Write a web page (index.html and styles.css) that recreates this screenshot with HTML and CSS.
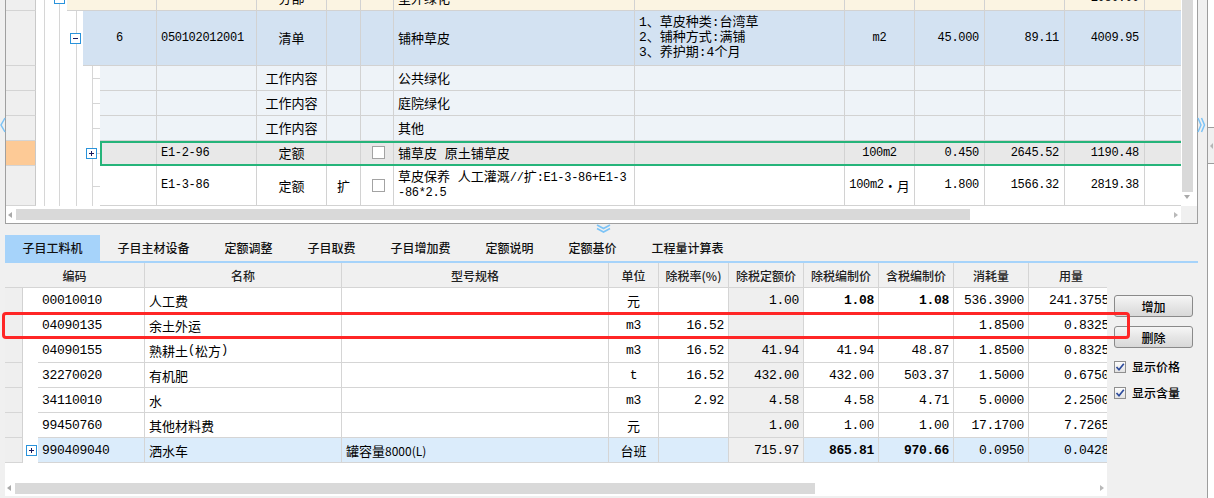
FILE: index.html
```html
<!DOCTYPE html>
<html lang="zh-CN">
<head>
<meta charset="utf-8">
<title>子目工料机</title>
<link rel="stylesheet" href="styles.css">
</head>
<body>
<div class="app">
  <div class="main">
    <div class="tp">
      <div class="tp-body">
        <div class="rows">
          <div class="rows-in">
            <div class="r h25 lv0 cream">
              <div class="rh"></div>
              <div class="tree"><span class="tb at18"></span></div>
              <div class="cells">
                <div class="c c1"></div>
                <div class="c c2"></div>
                <div class="c c3 ctr">分部</div>
                <div class="c c4"></div>
                <div class="c c5"></div>
                <div class="c c6">室外绿化</div>
                <div class="c c7"></div>
                <div class="c c8"></div>
                <div class="c c9"></div>
                <div class="c c10"></div>
                <div class="c c11 n rt">1080.00</div>
                <div class="c c12"></div>
              </div>
            </div>
            <div class="r h55 lv1 blue">
              <div class="rh"></div>
              <div class="tree"><span class="tb at34"></span></div>
              <div class="cells">
                <div class="c c1 n ctr">6</div>
                <div class="c c2 n">050102012001</div>
                <div class="c c3 ctr">清单</div>
                <div class="c c4"></div>
                <div class="c c5"></div>
                <div class="c c6">铺种草皮</div>
                <div class="c c7 multi">
                  <div>1、草皮种类:台湾草</div>
                  <div>2、铺种方式:满铺</div>
                  <div>3、养护期:4个月</div>
                </div>
                <div class="c c8 n ctr">m2</div>
                <div class="c c9 n rt">45.000</div>
                <div class="c c10 n rt">89.11</div>
                <div class="c c11 n rt">4009.95</div>
                <div class="c c12"></div>
              </div>
            </div>
            <div class="r h25 lv2 light">
              <div class="rh"></div>
              <div class="tree tk"></div>
              <div class="cells">
                <div class="c c1"></div>
                <div class="c c2"></div>
                <div class="c c3 ctr">工作内容</div>
                <div class="c c4"></div>
                <div class="c c5"></div>
                <div class="c c6">公共绿化</div>
                <div class="c c7"></div>
                <div class="c c8"></div>
                <div class="c c9"></div>
                <div class="c c10"></div>
                <div class="c c11"></div>
                <div class="c c12"></div>
              </div>
            </div>
            <div class="r h25 lv2 light">
              <div class="rh"></div>
              <div class="tree tk"></div>
              <div class="cells">
                <div class="c c1"></div>
                <div class="c c2"></div>
                <div class="c c3 ctr">工作内容</div>
                <div class="c c4"></div>
                <div class="c c5"></div>
                <div class="c c6">庭院绿化</div>
                <div class="c c7"></div>
                <div class="c c8"></div>
                <div class="c c9"></div>
                <div class="c c10"></div>
                <div class="c c11"></div>
                <div class="c c12"></div>
              </div>
            </div>
            <div class="r h25 lv2 light">
              <div class="rh"></div>
              <div class="tree tk"></div>
              <div class="cells">
                <div class="c c1"></div>
                <div class="c c2"></div>
                <div class="c c3 ctr">工作内容</div>
                <div class="c c4"></div>
                <div class="c c5"></div>
                <div class="c c6">其他</div>
                <div class="c c7"></div>
                <div class="c c8"></div>
                <div class="c c9"></div>
                <div class="c c10"></div>
                <div class="c c11"></div>
                <div class="c c12"></div>
              </div>
            </div>
            <div class="r h25 lv2 sel">
              <div class="rh"></div>
              <div class="tree tk"><span class="tb plus at50"></span></div>
              <div class="cells">
                <div class="c c1"></div>
                <div class="c c2 n">E1-2-96</div>
                <div class="c c3 ctr">定额</div>
                <div class="c c4"></div>
                <div class="c c5"><span class="cb"></span></div>
                <div class="c c6">铺草皮 原土铺草皮</div>
                <div class="c c7"></div>
                <div class="c c8 n ctr">100m2</div>
                <div class="c c9 n rt">0.450</div>
                <div class="c c10 n rt">2645.52</div>
                <div class="c c11 n rt">1190.48</div>
                <div class="c c12"></div>
              </div>
            </div>
            <div class="r h40 lv2 white">
              <div class="rh"></div>
              <div class="tree tk"></div>
              <div class="cells">
                <div class="c c1"></div>
                <div class="c c2 n">E1-3-86</div>
                <div class="c c3 ctr">定额</div>
                <div class="c c4 ctr">扩</div>
                <div class="c c5"><span class="cb"></span></div>
                <div class="c c6 multi">
                  <div>草皮保养 人工灌溉<span class="n">//</span>扩<span class="n">:E1-3-86+E1-3</span></div>
                  <div class="n">-86*2.5</div>
                </div>
                <div class="c c7"></div>
                <div class="c c8 ctr"><span class="n">100m2</span>・月</div>
                <div class="c c9 n rt">1.800</div>
                <div class="c c10 n rt">1566.32</div>
                <div class="c c11 n rt">2819.38</div>
                <div class="c c12"></div>
              </div>
            </div>
          </div>
        </div>
        <div class="vs">
          <div class="vs-thumb"></div>
          <div class="vs-arr"></div>
        </div>
      </div>
      <div class="hs">
        <span class="arr-l"></span>
        <span class="hs-thumb"></span>
        <span class="hs-space"></span>
        <span class="arr-r"></span>
        <span class="hs-corner"></span>
      </div>
    </div>

    <div class="split">
      <svg width="15" height="9" viewBox="0 0 15 9"><polyline points="1,1 7.5,4.5 14,1" fill="none" stroke="#7cc3f6" stroke-width="1.6"/><polyline points="1,4.5 7.5,8 14,4.5" fill="none" stroke="#7cc3f6" stroke-width="1.6"/></svg>
    </div>

    <div class="tabs">
      <div class="tab on">子目工料机</div>
      <div class="tab">子目主材设备</div>
      <div class="tab">定额调整</div>
      <div class="tab">子目取费</div>
      <div class="tab">子目增加费</div>
      <div class="tab">定额说明</div>
      <div class="tab">定额基价</div>
      <div class="tab">工程量计算表</div>
    </div>

    <div class="bp">
      <div class="bgrid">
        <div class="br bh">
          <div class="bc bh0">编码</div>
          <div class="bc bw2">名称</div>
          <div class="bc bw3">型号规格</div>
          <div class="bc bw4">单位</div>
          <div class="bc bw5">除税率(%)</div>
          <div class="bc bw6">除税定额价</div>
          <div class="bc bw7">除税编制价</div>
          <div class="bc bw8">含税编制价</div>
          <div class="bc bw9">消耗量</div>
          <div class="bc bw10">用量</div>
        </div>
        <div class="br">
          <div class="brh"></div><div class="btree"></div>
          <div class="bc bw1 n">00010010</div>
          <div class="bc bw2">人工费</div>
          <div class="bc bw3"></div>
          <div class="bc bw4 ctr">元</div>
          <div class="bc bw5 n rt"></div>
          <div class="bc bw6 n rt g">1.00</div>
          <div class="bc bw7 n rt b">1.08</div>
          <div class="bc bw8 n rt b">1.08</div>
          <div class="bc bw9 n rt">536.3900</div>
          <div class="bc bw10 n rt">241.3755</div>
        </div>
        <div class="br">
          <div class="brh"></div><div class="btree"></div>
          <div class="bc bw1 n">04090135</div>
          <div class="bc bw2">余土外运</div>
          <div class="bc bw3"></div>
          <div class="bc bw4 n ctr">m3</div>
          <div class="bc bw5 n rt">16.52</div>
          <div class="bc bw6 n rt g"></div>
          <div class="bc bw7 n rt"></div>
          <div class="bc bw8 n rt"></div>
          <div class="bc bw9 n rt">1.8500</div>
          <div class="bc bw10 n rt">0.8325</div>
        </div>
        <div class="br">
          <div class="brh"></div><div class="btree"></div>
          <div class="bc bw1 n">04090155</div>
          <div class="bc bw2">熟耕土<span class="n">(</span>松方<span class="n">)</span></div>
          <div class="bc bw3"></div>
          <div class="bc bw4 n ctr">m3</div>
          <div class="bc bw5 n rt">16.52</div>
          <div class="bc bw6 n rt g">41.94</div>
          <div class="bc bw7 n rt">41.94</div>
          <div class="bc bw8 n rt">48.87</div>
          <div class="bc bw9 n rt">1.8500</div>
          <div class="bc bw10 n rt">0.8325</div>
        </div>
        <div class="br">
          <div class="brh"></div><div class="btree"></div>
          <div class="bc bw1 n">32270020</div>
          <div class="bc bw2">有机肥</div>
          <div class="bc bw3"></div>
          <div class="bc bw4 n ctr">t</div>
          <div class="bc bw5 n rt">16.52</div>
          <div class="bc bw6 n rt g">432.00</div>
          <div class="bc bw7 n rt">432.00</div>
          <div class="bc bw8 n rt">503.37</div>
          <div class="bc bw9 n rt">1.5000</div>
          <div class="bc bw10 n rt">0.6750</div>
        </div>
        <div class="br">
          <div class="brh"></div><div class="btree"></div>
          <div class="bc bw1 n">34110010</div>
          <div class="bc bw2">水</div>
          <div class="bc bw3"></div>
          <div class="bc bw4 n ctr">m3</div>
          <div class="bc bw5 n rt">2.92</div>
          <div class="bc bw6 n rt g">4.58</div>
          <div class="bc bw7 n rt">4.58</div>
          <div class="bc bw8 n rt">4.71</div>
          <div class="bc bw9 n rt">5.0000</div>
          <div class="bc bw10 n rt">2.2500</div>
        </div>
        <div class="br">
          <div class="brh"></div><div class="btree"></div>
          <div class="bc bw1 n">99450760</div>
          <div class="bc bw2">其他材料费</div>
          <div class="bc bw3"></div>
          <div class="bc bw4 ctr">元</div>
          <div class="bc bw5 n rt"></div>
          <div class="bc bw6 n rt g">1.00</div>
          <div class="bc bw7 n rt">1.00</div>
          <div class="bc bw8 n rt">1.00</div>
          <div class="bc bw9 n rt">17.1700</div>
          <div class="bc bw10 n rt">7.7265</div>
        </div>
        <div class="br hl">
          <div class="brh"></div><div class="btree"><span class="tb plus at3"></span></div>
          <div class="bc bw1 n">990409040</div>
          <div class="bc bw2">洒水车</div>
          <div class="bc bw3">罐容量<span class="sans">8000(L)</span></div>
          <div class="bc bw4 ctr">台班</div>
          <div class="bc bw5 n rt"></div>
          <div class="bc bw6 n rt g">715.97</div>
          <div class="bc bw7 n rt b">865.81</div>
          <div class="bc bw8 n rt b">970.66</div>
          <div class="bc bw9 n rt">0.0950</div>
          <div class="bc bw10 n rt">0.0428</div>
        </div>
        <div class="bfill"></div>
        <div class="bhs">
          <span class="arr-l"></span>
          <span class="bhs-thumb"></span>
          <span class="hs-space"></span>
          <span class="arr-r"></span>
        </div>
      </div>
      <div class="bside">
        <div class="btn">增加</div>
        <div class="btn">删除</div>
        <label class="chk first"><span class="box"><svg width="10" height="10" viewBox="0 0 10 10"><polyline points="1.5,5 4,7.8 8.8,1.8" fill="none" stroke="#2d4b9c" stroke-width="1.7"/></svg></span><span class="lbl">显示价格</span></label>
        <label class="chk"><span class="box"><svg width="10" height="10" viewBox="0 0 10 10"><polyline points="1.5,5 4,7.8 8.8,1.8" fill="none" stroke="#2d4b9c" stroke-width="1.7"/></svg></span><span class="lbl">显示含量</span></label>
      </div>
    </div>
  </div>
  <div class="side">
    <div class="side-gap"></div>
    <div class="side-line"></div>
    <div class="side-rest">
      <div class="side-a"></div>
      <div class="side-b"><span class="mini-l"></span></div>
      <div class="side-c"></div>
    </div>
  </div>
</div>

<svg class="chev-l" width="6" height="16" viewBox="0 0 6 16"><polyline points="5,1 1,8 5,15" fill="none" stroke="#7cc3f6" stroke-width="1.5"/></svg>
<svg class="chev-r" width="9" height="16" viewBox="0 0 9 16"><polyline points="1,1 4,8 1,15" fill="none" stroke="#7cc3f6" stroke-width="1.5"/><polyline points="4.5,1 7.5,8 4.5,15" fill="none" stroke="#7cc3f6" stroke-width="1.5"/></svg>
<div class="mark"></div>
</body>
</html>
```

FILE: styles.css
```css
* { box-sizing: border-box; margin: 0; padding: 0; }
html, body { width: 1214px; height: 498px; overflow: hidden; }
body {
  background: #f0f0f0;
  font-family: "Noto Sans CJK SC", "Liberation Sans", sans-serif;
  font-size: 12px;
  color: #000;
  position: relative;
}
.app { display: flex; height: 498px; }
.main { width: 1198px; flex-shrink: 0; padding-left: 5px; display: flex; flex-direction: column; }

/* right strip */
.side { width: 16px; flex-shrink: 0; display: flex; }
.side-gap { width: 9px; }
.side-line { width: 1px; background: #9d9d9d; }
.side-rest { flex: 1; display: flex; flex-direction: column; }
.side-a { height: 128px; background: #fff; border-bottom: 1px solid #9d9d9d; }
.side-b { height: 35px; display: flex; align-items: center; justify-content: center; }
.side-c { flex: 1; background: #fff; border-top: 1px solid #9d9d9d; }
.mini-l { width: 0; height: 0; border-right: 3px solid #b5b5b5; border-top: 3px solid transparent; border-bottom: 3px solid transparent; }

/* top panel */
.tp {
  height: 224px;
  border: 1px solid #a0a0a0;
  border-top: 0;
  background: #fff;
  display: flex;
  flex-direction: column;
  flex-shrink: 0;
}
.tp-body { height: 206px; display: flex; flex-shrink: 0; }
.rows { width: 1175px; overflow: hidden; flex-shrink: 0; }
.rows-in { margin-top: -14px; }
.r { display: flex; }
.h25 { height: 25px; }
.h55 { height: 55px; }
.h40 { height: 40px; }
.rh {
  width: 30px;
  flex-shrink: 0;
  background: #efefef;
  border-right: 1px solid #c9c9c9;
  border-bottom: 1px solid #d4d4d4;
}
.sel .rh { background: #fdca96; }

.tree {
  flex-shrink: 0;
  display: flex;
  align-items: center;
  background-color: #fff;
  background-image:
    linear-gradient(#d6d6d6, #d6d6d6),
    linear-gradient(#d6d6d6, #d6d6d6),
    linear-gradient(#d6d6d6, #d6d6d6),
    linear-gradient(#d6d6d6, #d6d6d6);
  background-size: 1px 100%, 1px 100%, 1px 100%, 1px 100%;
  background-position: 8px 0, 23px 0, 40px 0, 56px 0;
  background-repeat: no-repeat;
}
.tree.tk {
  background-image:
    linear-gradient(#d6d6d6, #d6d6d6),
    linear-gradient(#d6d6d6, #d6d6d6),
    linear-gradient(#d6d6d6, #d6d6d6),
    linear-gradient(#d6d6d6, #d6d6d6),
    linear-gradient(#d6d6d6, #d6d6d6);
  background-size: 1px 100%, 1px 100%, 1px 100%, 1px 100%, 8px 1px;
  background-position: 8px 0, 23px 0, 40px 0, 56px 0, 56px 50%;
}
.lv0 .tree { width: 31px; }
.lv1 .tree { width: 47px; }
.lv2 .tree { width: 64px; }

.tb {
  width: 11px;
  height: 11px;
  flex-shrink: 0;
  border: 1px solid #2a93db;
  background: #fff;
  position: relative;
}
.tb::before {
  content: "";
  position: absolute;
  left: 2px; right: 2px; top: 4px;
  height: 1px;
  background: #1b1b5e;
}
.tb.plus::after {
  content: "";
  position: absolute;
  top: 2px; bottom: 2px; left: 4px;
  width: 1px;
  background: #1b1b5e;
}
.at3 { margin-left: 3px; }
.at18 { margin-left: 18px; }
.at34 { margin-left: 34px; }
.at50 { margin-left: 50px; }

.cells { flex: 1; display: flex; position: relative; min-width: 0; }
.cream .cells { background: #fbf4e2; }
.blue .cells { background: #d3e2f2; }
.light .cells { background: #eef3f8; }
.sel .cells { background: #e8e8e8; }
.white .cells { background: #fff; }
.sel .cells::after {
  content: "";
  position: absolute;
  left: 0; top: 0; right: 0; bottom: 0;
  border: 2px solid #25b47a;
  border-right: 0;
  pointer-events: none;
}

.c {
  flex-shrink: 0;
  border-right: 1px solid #d2d2d2;
  border-bottom: 1px solid #d2d2d2;
  display: flex;
  align-items: center;
  padding: 0 4px 1px;
  white-space: nowrap;
  overflow: hidden;
  font-family: "Liberation Mono", "Noto Sans CJK SC", monospace;
  font-size: 13px;
}
.c1 { flex: 1 1 0; min-width: 0; }
.c2 { width: 100px; }
.c3 { width: 70px; }
.c4 { width: 34px; }
.c5 { width: 33px; }
.c6 { width: 241px; }
.c7 { width: 210px; }
.c8 { width: 70px; }
.c9 { width: 70px; }
.c10 { width: 80px; }
.c11 { width: 80px; }
.c12 { width: 36px; border-right: 0; }
.multi {
  flex-direction: column;
  align-items: flex-start;
  justify-content: center;
  line-height: 15px;
}
.cb {
  width: 13px;
  height: 13px;
  border: 1px solid #a3a3a3;
  background: #fff;
  margin-left: 7px;
}

.ctr { justify-content: center; }
.rt { justify-content: flex-end; padding-right: 5px; }
.n { font-family: "Liberation Mono", monospace; font-size: 12px; letter-spacing: -0.3px; }
.b { font-weight: 700; }
.sans { font-family: "Noto Sans CJK SC", sans-serif; font-size: 12px; }

/* vertical scrollbar */
.vs {
  width: 16px;
  flex-shrink: 0;
  background: #fff;
  display: flex;
  flex-direction: column;
  padding-left: 1px;
}
.vs-thumb { width: 11px; height: 192px; background: #d9d9d9; }
.vs-arr {
  width: 0; height: 0;
  margin: 3px 0 0 2px;
  border-left: 3px solid transparent;
  border-right: 3px solid transparent;
  border-top: 4px solid #a9a9a9;
}

/* horizontal scrollbars */
.hs { height: 17px; display: flex; align-items: center; flex-shrink: 0; }
.arr-l {
  width: 0; height: 0;
  margin-left: 2px;
  border-right: 4px solid #a9a9a9;
  border-top: 3px solid transparent;
  border-bottom: 3px solid transparent;
}
.arr-r {
  width: 0; height: 0;
  margin-right: 3px;
  border-left: 4px solid #b9b9b9;
  border-top: 3px solid transparent;
  border-bottom: 3px solid transparent;
}
.hs-thumb { width: 954px; height: 11px; margin-left: 4px; background: #d9d9d9; }
.hs-space { flex: 1; }
.hs-corner { width: 16px; height: 17px; background: #f0f0f0; }

/* splitter */
.split { height: 11px; flex-shrink: 0; display: flex; justify-content: center; padding-left: 4px; }

/* tabs */
.tabs { height: 28px; flex-shrink: 0; display: flex; border-bottom: 2px solid #a6d3fa; }
.tab {
  padding: 0 17.5px 2px;
  display: flex;
  align-items: center;
  font-size: 12px;
  font-weight: 500;
  color: #111;
}
.tab.on { background: #a6d3fa; }

/* bottom panel */
.bp { height: 233px; flex-shrink: 0; display: flex; }
.bgrid {
  width: 1102px;
  flex-shrink: 0;
  background: #fff;
  overflow: hidden;
  display: flex;
  flex-direction: column;
}
.br { display: flex; height: 25px; flex-shrink: 0; }
.brh {
  width: 18px;
  flex-shrink: 0;
  background: #efefef;
  border-right: 1px solid #d2d2d2;
  border-bottom: 1px solid #d6d6d6;
}
.btree { width: 15px; flex-shrink: 0; background: #fff; display: flex; align-items: center; }
.bc {
  flex-shrink: 0;
  border-right: 1px solid #d5d5d5;
  border-bottom: 1px solid #d5d5d5;
  display: flex;
  align-items: center;
  padding: 0 4px;
  white-space: nowrap;
  overflow: hidden;
  font-family: "Liberation Mono", "Noto Sans CJK SC", monospace;
  font-size: 13px;
}
.bh .bc {
  background: #f0f0f0;
  justify-content: center;
  font-family: "Noto Sans CJK SC", sans-serif;
  font-size: 12px;
  font-weight: 500;
  color: #222;
}
.bh0 { width: 140px; }
.bw1 { width: 107px; }
.bw2 { width: 197px; }
.bw3 { width: 267px; }
.bw4 { width: 50px; }
.bw5 { width: 70px; }
.bw6, .bw7, .bw8, .bw9 { width: 75px; }
.bw10 { width: 85px; }
.g { background: #efefef; }
.hl .bc { background: #dbecfb; }
.hl .bc.g { background: #efefef; }
.bfill { flex: 1; }
.bhs { height: 16px; flex-shrink: 0; display: flex; align-items: center; }
.bhs-thumb { width: 800px; height: 11px; margin-left: 4px; background: #d9d9d9; }

.bside { flex: 1; padding: 32px 0 0 7px; display: flex; flex-direction: column; }
.btn {
  width: 79px;
  height: 22px;
  border: 1px solid #8a8a8a;
  border-radius: 3px;
  background: linear-gradient(#f6f6f6, #e6e6e6 50%, #d8d8d8);
  display: flex;
  align-items: center;
  justify-content: center;
  font-size: 12px;
  font-weight: 500;
}
.btn + .btn { margin-top: 9px; }
.chk { display: flex; align-items: center; height: 12px; margin-top: 14px; font-size: 12px; font-weight: 500; }
.chk.first { margin-top: 13px; }
.chk .box {
  width: 12px;
  height: 12px;
  border: 1px solid #8f8f8f;
  background: linear-gradient(#fdfdfd, #e2e2e2);
  display: flex;
  align-items: center;
  justify-content: center;
}
.chk .lbl { margin-left: 6px; margin-top: -2px; }

/* overlays */
.chev-l { position: absolute; left: 0; top: 117px; }
.chev-r { position: absolute; left: 1197px; top: 117px; }
.mark {
  position: absolute;
  left: 2px;
  top: 312px;
  width: 1128px;
  height: 27px;
  border: 3px solid #ff2626;
  border-radius: 4px;
  pointer-events: none;
}
```
